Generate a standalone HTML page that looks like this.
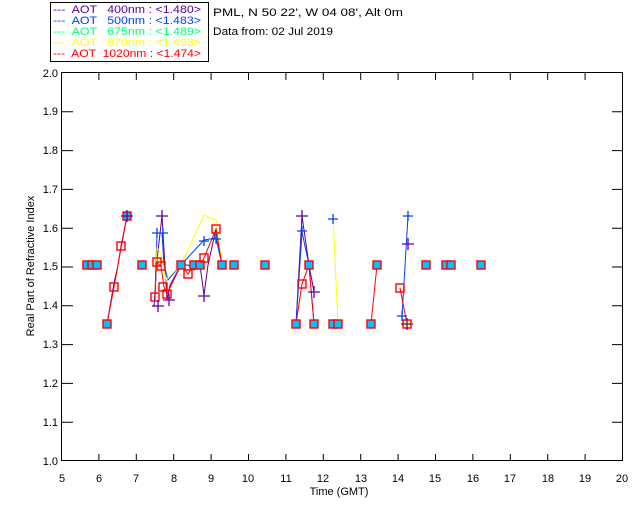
<!DOCTYPE html>
<html><head><style>
html,body{margin:0;padding:0;background:#fff;}
svg text{font-family:"Liberation Sans",sans-serif;font-size:11px;white-space:pre;}
</style></head><body>
<svg width="640" height="512" xmlns="http://www.w3.org/2000/svg" xml:space="preserve">
<rect width="640" height="512" fill="#fff"/>
<rect x="50.5" y="2.5" width="158" height="59" fill="none" stroke="#000"/>
<g font-size="11">
<text x="53" y="13" fill="#6000a0" textLength="148" lengthAdjust="spacingAndGlyphs">---  AOT   400nm : &lt;1.480&gt;</text>
<text x="53" y="24" fill="#0040ff" textLength="148" lengthAdjust="spacingAndGlyphs">---  AOT   500nm : &lt;1.483&gt;</text>
<text x="53" y="35" fill="#00ff80" textLength="148" lengthAdjust="spacingAndGlyphs">---  AOT   675nm : &lt;1.489&gt;</text>
<text x="53" y="46" fill="#ffff00" textLength="148" lengthAdjust="spacingAndGlyphs">---  AOT   870nm : &lt;1.493&gt;</text>
<text x="53" y="57" fill="#ff0000" textLength="148" lengthAdjust="spacingAndGlyphs">---  AOT  1020nm : &lt;1.474&gt;</text>
</g>
<text x="213" y="16" fill="#000" textLength="190" lengthAdjust="spacingAndGlyphs">PML, N 50 22', W 04 08', Alt 0m</text>
<text x="213" y="35" fill="#000" textLength="120" lengthAdjust="spacingAndGlyphs">Data from: 02 Jul 2019</text>
<rect x="61.5" y="72.5" width="561" height="388" fill="none" stroke="#000"/>
<g stroke="#000">
<path d="M98.9 461v-7M136.3 461v-7M173.7 461v-7M211.1 461v-7M248.5 461v-7M285.9 461v-7M323.3 461v-7M360.7 461v-7M398.1 461v-7M435.5 461v-7M472.9 461v-7M510.3 461v-7M547.7 461v-7M585.1 461v-7M98.9 73v7M136.3 73v7M173.7 73v7M211.1 73v7M248.5 73v7M285.9 73v7M323.3 73v7M360.7 73v7M398.1 73v7M435.5 73v7M472.9 73v7M510.3 73v7M547.7 73v7M585.1 73v7"/>
<path d="M62 111.8h11M62 150.6h11M62 189.4h11M62 228.2h11M62 267h11M62 305.8h11M62 344.6h11M62 383.4h11M62 422.2h11M623 111.8h-11M623 150.6h-11M623 189.4h-11M623 228.2h-11M623 267h-11M623 305.8h-11M623 344.6h-11M623 383.4h-11M623 422.2h-11"/>
</g>
<g font-size="10" text-anchor="end" fill="#000">
<text x="58" y="77">2.0</text><text x="58" y="115">1.9</text><text x="58" y="154">1.8</text><text x="58" y="193">1.7</text><text x="58" y="232">1.6</text><text x="58" y="270">1.5</text><text x="58" y="309">1.4</text><text x="58" y="348">1.3</text><text x="58" y="387">1.2</text><text x="58" y="426">1.1</text><text x="58" y="465">1.0</text>
</g>
<g font-size="10" text-anchor="middle" fill="#000">
<text x="62" y="482">5</text><text x="99" y="482">6</text><text x="136" y="482">7</text><text x="174" y="482">8</text><text x="211" y="482">9</text><text x="248" y="482">10</text><text x="286" y="482">11</text><text x="323" y="482">12</text><text x="361" y="482">13</text><text x="398" y="482">14</text><text x="435" y="482">15</text><text x="473" y="482">16</text><text x="510" y="482">17</text><text x="548" y="482">18</text><text x="585" y="482">19</text><text x="622" y="482">20</text>
<text x="339" y="495">Time (GMT)</text>
</g>
<text transform="translate(34,266) rotate(-90)" text-anchor="middle" font-size="10" fill="#000">Real Part of Refractive Index</text>
<g fill="none" stroke-width="1">
<polyline stroke="#6000a0" points="107,324 114,283 118,265 121,248 127,216"/>
<polyline stroke="#6000a0" points="154,307 157,260 162,216 164,250 167,300 170,285 181,265 188,265 194,270 200,265 204,295 208,265 216,229 222,265"/>
<polyline stroke="#0040ff" points="155,300 157,233 162,233 164,265 168,280 181,265 204,240 216,238 222,265"/>
<polyline stroke="#ffff00" points="155,290 157,248 161,253 166,280 181,265 204,215 216,220 222,265"/>
<polyline stroke="#ff0000" points="107,324 114,287 118,265 121,246 127,216"/>
<polyline stroke="#ff0000" points="155,297 156,262 161,266 164,287 167,294 181,265 188,274 194,265 200,265 204,258 216,229 222,265"/>
<polyline stroke="#6000a0" points="296,324 302,216 309,265 314,292"/>
<polyline stroke="#0040ff" points="296,324 302,232 309,265 314,324"/>
<polyline stroke="#ff0000" points="296,324 302,284 309,265 314,324"/>
<polyline stroke="#ffff00" points="333,216 338,324"/>
<polyline stroke="#ff0000" points="371,324 377,265"/>
<polyline stroke="#0040ff" points="402,316 408,216"/>
<polyline stroke="#ff0000" points="400,288 407,324"/>
</g>
<g stroke="#ff0000" stroke-width="1.4" fill="#00c0ff">
<rect x="83" y="261" width="8" height="8"/><rect x="88" y="261" width="8" height="8"/><rect x="93" y="261" width="8" height="8"/>
<rect x="103" y="320" width="8" height="8"/><rect x="110" y="283" width="8" height="8" fill="none"/><rect x="117" y="242" width="8" height="8" fill="none"/>
<rect x="123" y="212" width="8" height="8"/><rect x="138" y="261" width="8" height="8"/>
<rect x="151" y="293" width="8" height="8" fill="none"/><rect x="153" y="258" width="8" height="8" fill="none"/><rect x="157" y="262" width="8" height="8" fill="none"/>
<rect x="159" y="283" width="8" height="8" fill="none"/><rect x="163" y="290" width="8" height="8" fill="none"/>
<rect x="177" y="261" width="8" height="8"/><rect x="184" y="270" width="8" height="8" fill="none"/><rect x="190" y="261" width="8" height="8"/><rect x="196" y="261" width="8" height="8"/>
<rect x="200" y="254" width="8" height="8" fill="none"/><rect x="212" y="225" width="8" height="8" fill="none"/><rect x="218" y="261" width="8" height="8"/><rect x="230" y="261" width="8" height="8"/><rect x="261" y="261" width="8" height="8"/>
<rect x="292" y="320" width="8" height="8"/><rect x="298" y="280" width="8" height="8" fill="none"/><rect x="305" y="261" width="8" height="8"/><rect x="310" y="320" width="8" height="8"/>
<rect x="329" y="320" width="8" height="8"/><rect x="334" y="320" width="8" height="8"/><rect x="367" y="320" width="8" height="8"/><rect x="373" y="261" width="8" height="8"/>
<rect x="396" y="284" width="8" height="8" fill="none"/><rect x="403" y="320" width="8" height="8" fill="#ffff80"/>
<rect x="422" y="261" width="8" height="8"/><rect x="442" y="261" width="8" height="8"/><rect x="447" y="261" width="8" height="8"/><rect x="477" y="261" width="8" height="8"/>
</g>
<g stroke="#6000a0" stroke-width="1.3">
<path d="M127 210v12M121 216h12M158 300v12M152 306h12M162 210v12M156 216h12M169 294v12M163 300h12M204 290v12M198 296h12M302 210v12M296 216h12M314 286v12M308 292h12M407 318v12M401 324h12M408 238v12M402 244h12"/>
</g>
<g stroke="#0040ff" stroke-width="1.3">
<path d="M157 228v10M152 233h10M163 228v10M158 233h10M204 236v10M199 241h10M216 234v10M211 239h10M302 226v10M297 231h10M333 214v10M328 219h10M402 311v10M397 316h10M408 211v10M403 216h10"/>
</g>
</svg>
</body></html>
